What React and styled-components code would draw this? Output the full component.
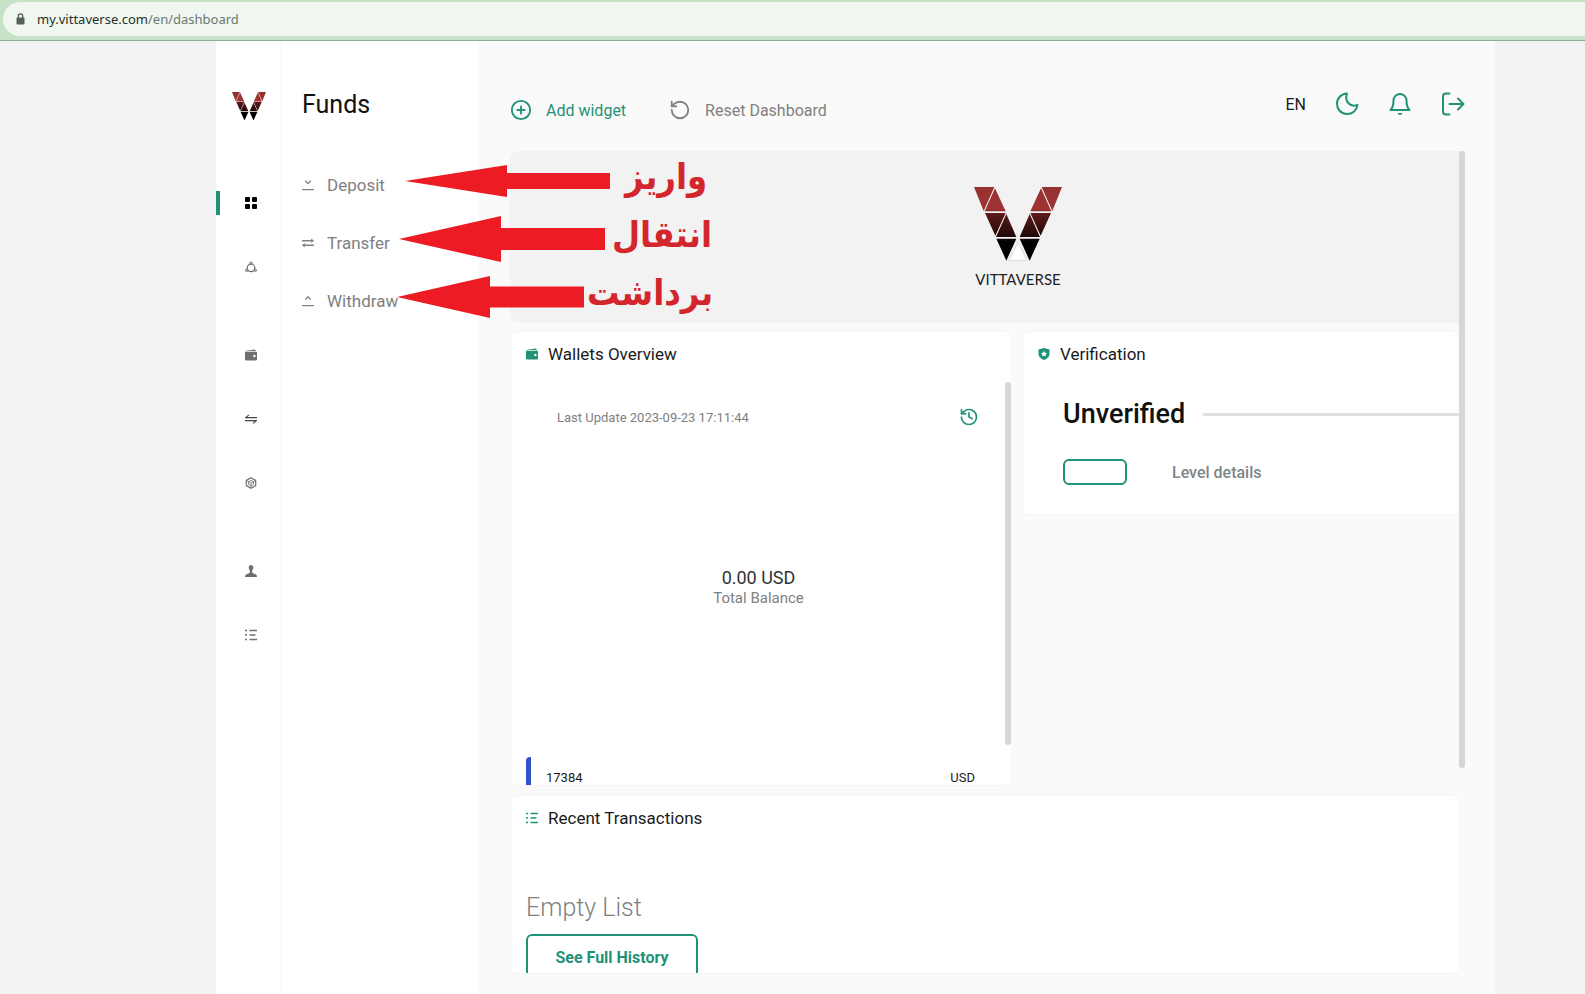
import styled, { createGlobalStyle, css } from 'styled-components';
import { CirclePlus, RotateCcw, History } from 'lucide-react';

const green = '#1f9277';
const grey = '#808080';

const GlobalStyle = createGlobalStyle`
  * {
    box-sizing: border-box;
  }
  body {
    margin: 0;
    background: #f3f3f3;
    color: #1a1a1a;
    font-family: Roboto, "Liberation Sans", sans-serif;
    font-size: 16px;
  }
  h1, h2, h3, p, ul {
    margin: 0;
    padding: 0;
    font-weight: 400;
  }
  ul {
    list-style: none;
  }
  a {
    color: inherit;
    text-decoration: none;
  }
  button {
    padding: 0;
    border: 0;
    background: none;
    color: inherit;
    font: inherit;
    cursor: pointer;
  }
  svg {
    display: block;
    flex: none;
  }
`;

const Page = styled.div`
  display: flex;
  flex-direction: column;
  height: 100vh;
  overflow: hidden;
`;

const BrowserBar = styled.header`
  flex: none;
  padding: 2px 0 4px 3px;
  background: #c6e2c7;
  border-bottom: 1px solid #92ad96;
`;

const AddressField = styled.div`
  display: flex;
  align-items: center;
  gap: 12px;
  height: 34px;
  padding-left: 13px;
  border-radius: 17px 0 0 17px;
  background: #eff7f0;
  color: #6d766f;
  font-family: "Noto Sans", sans-serif;
  font-size: 13px;
  strong {
    color: #2a2f2b;
    font-weight: 400;
  }
`;

const Shell = styled.div`
  flex: 1;
  min-height: 0;
  display: flex;
  margin: 0 90px 0 216px;
`;

const Rail = styled.nav`
  flex: none;
  width: 65px;
  background: #fff;
  border-right: 1px solid #f9f9f9;
`;

const RailLogo = styled.a`
  display: flex;
  align-items: flex-start;
  justify-content: center;
  padding: 51px 0 0 2px;
  height: 130px;
`;

const RailGroup = styled.ul`
  margin-bottom: 24px;
`;

const RailLink = styled.a`
  display: flex;
  align-items: center;
  height: 64px;
  padding-left: 29px;
  color: #6f6f6f;
  ${props => props.$active && css`
    padding-left: 0;
    color: #000;
    &::before {
      content: '';
      width: 4px;
      height: 24px;
      margin-right: 25px;
      background: ${green};
    }
  `}
`;

const SubMenu = styled.nav`
  flex: none;
  width: 198px;
  padding: 49px 0 0 21px;
  background: #fff;
  h1 {
    font-size: 25px;
    line-height: 30px;
    color: #111;
  }
`;

const MenuList = styled.ul`
  margin-top: 36px;
`;

const MenuItem = styled.li`
  position: relative;
  height: 58px;
  a {
    display: flex;
    align-items: center;
    gap: 13px;
    height: 58px;
    color: ${grey};
    font-size: 17px;
  }
`;

// red callouts float over the dashboard
const Callout = styled.div`
  position: absolute;
  z-index: 2;
  top: -4px;
  left: ${props => props.$left}px;
  height: 58px;
  display: flex;
  align-items: center;
  gap: ${props => props.$gap}px;
  pointer-events: none;
  span {
    padding-bottom: 8px;
    color: #d3262c;
    font-family: "DejaVu Sans Condensed", "DejaVu Sans", sans-serif;
    font-size: 36px;
    font-weight: 700;
    line-height: 44px;
    white-space: nowrap;
  }
`;

const Main = styled.main`
  flex: 1;
  min-width: 0;
  display: flex;
  flex-direction: column;
  padding: 0 30px 20px 31px;
  background: #fafafa;
`;

const TopBar = styled.div`
  flex: none;
  display: flex;
  justify-content: space-between;
  height: 110px;
  padding-top: 46px;
`;

const Tools = styled.div`
  display: flex;
  align-items: center;
  gap: 43px;
  height: 46px;
`;

const ToolButton = styled.button`
  display: flex;
  align-items: center;
  gap: 14px;
  color: ${props => (props.$primary ? green : grey)};
`;

const Actions = styled.div`
  display: flex;
  align-items: center;
  gap: 29px;
  height: 34px;
  color: ${green};
`;

const Language = styled.button`
  color: #1a1a1a;
`;

const ScrollArea = styled.div`
  flex: 1;
  min-height: 0;
  display: flex;
`;

const Thumb = styled.div`
  flex: none;
  width: 6px;
  height: ${props => props.$height};
  border-radius: 3px;
  background: #d6d6d6;
`;

const Widgets = styled.div`
  flex: 1;
  min-width: 0;
  display: flex;
  flex-direction: column;
  gap: 9px;
`;

const Banner = styled.section`
  flex: none;
  display: flex;
  flex-direction: column;
  align-items: center;
  gap: 7px;
  height: 171px;
  padding: 36px 0 0 67px;
  border-radius: 8px 0 0 8px;
  background: #f2f2f2;
  p {
    font-family: Lato, sans-serif;
    font-size: 15px;
    line-height: 20px;
    color: #222;
  }
`;

const Columns = styled.div`
  flex: none;
  display: grid;
  grid-template-columns: 501fr 437fr;
  align-items: start;
  gap: 11px;
`;

const Card = styled.section`
  display: flex;
  flex-direction: column;
  min-width: 0;
  height: ${props => props.$height};
  flex: ${props => (props.$fill ? '1' : 'none')};
  overflow: hidden;
  border: 1px solid #f5f5f5;
  border-right: 0;
  border-radius: 6px;
  background: #fff;
`;

const CardTitle = styled.h2`
  flex: none;
  display: flex;
  align-items: center;
  gap: 10px;
  height: 44px;
  padding-left: 15px;
  font-size: 17px;
  svg {
    color: ${green};
  }
`;

const WalletBody = styled.div`
  flex: 1;
  display: flex;
  padding-top: 6px;
`;

const WalletContent = styled.div`
  flex: 1;
  display: flex;
  flex-direction: column;
  justify-content: space-between;
  padding-left: 15px;
`;

const UpdateRow = styled.div`
  display: flex;
  align-items: center;
  justify-content: space-between;
  padding: 25px 26px 0 31px;
  color: ${grey};
  font-size: 13px;
  button {
    color: ${green};
  }
`;

const Balance = styled.div`
  padding: 0 14px 8px 0;
  text-align: center;
  font-size: 15px;
  line-height: 20px;
  color: ${grey};
  strong {
    display: block;
    color: #333;
    font-size: 18px;
    font-weight: 400;
  }
`;

const Account = styled.div`
  display: flex;
  justify-content: space-between;
  height: 28px;
  padding: 13px 30px 0 15px;
  border-left: 5px solid #3154cd;
  border-radius: 4px 0 0 0;
  font-size: 13px;
  line-height: 15px;
`;

const Status = styled.div`
  display: flex;
  align-items: center;
  gap: 18px;
  margin: 22px 0 0 40px;
  h3 {
    font-size: 27px;
    line-height: 32px;
    font-weight: 500;
    color: #111;
  }
  &::after {
    content: '';
    flex: 1;
    height: 3px;
    background: #e0e0e0;
  }
`;

const LevelRow = styled.div`
  display: flex;
  align-items: center;
  gap: 45px;
  margin: 29px 0 0 40px;
  color: #7c8588;
  font-weight: 500;
`;

const OutlineButton = styled.button`
  width: ${props => props.$width}px;
  height: ${props => props.$height}px;
  border: 2px solid ${green};
  border-radius: 6px;
  color: ${green};
  font-weight: 700;
`;

const EmptyState = styled.div`
  display: flex;
  flex-direction: column;
  align-items: flex-start;
  gap: 10px;
  padding: 52px 0 0 15px;
  p {
    color: ${grey};
    font-size: 25px;
    font-weight: 300;
    line-height: 32px;
  }
`;

function Logo({ width, id, foot }) {
  const arm = (
    <>
      <path d="M0 0H61L29 72Z" />
      <path d="M63 4L95 73H32Z" />
      <path d="M33 78H95L64 146Z" />
      <path d="M97 81L127 150H66Z" />
      <path d="M67 155H127L97 221Z" />
    </>
  );
  return (
    <svg width={width} viewBox="0 0 264 224" aria-hidden="true">
      <defs>
        <linearGradient id={id} x1="0" y1="0" x2="0" y2="222" gradientUnits="userSpaceOnUse">
          <stop offset="0" stopColor="#94302f" />
          <stop offset=".3" stopColor="#a13434" />
          <stop offset=".36" stopColor="#5c1a1a" />
          <stop offset=".68" stopColor="#1f0708" />
          <stop offset=".75" stopColor="#000" />
        </linearGradient>
      </defs>
      <g fill={`url(#${id})`}>
        {arm}
        <g transform="matrix(-1 0 0 1 264 0)">{arm}</g>
      </g>
      {foot && <path d="M132 166L159 220H105Z" fill="#fff" stroke="#dcdcdc" strokeWidth="3" />}
    </svg>
  );
}

function Glyph({ size = 12, box = 12, children, ...rest }) {
  return (
    <svg width={size} height={size} viewBox={`0 0 ${box} ${box}`} fill="none" stroke="currentColor" aria-hidden="true" {...rest}>
      {children}
    </svg>
  );
}

const LockIcon = () => (
  <Glyph width="9" height="12" viewBox="0 0 9 12" color="#55605a">
    <path d="M2.3 5V3a2.2 2.2 0 0 1 4.4 0v2" strokeWidth="1.3" />
    <rect x=".5" y="4.5" width="8" height="7" rx="1" fill="currentColor" stroke="none" />
  </Glyph>
);

const GridIcon = () => (
  <Glyph stroke="none" fill="currentColor">
    <rect width="5" height="5" rx="1" />
    <rect x="7" width="5" height="5" rx="1" />
    <rect y="7" width="5" height="5" rx="1" />
    <rect x="7" y="7" width="5" height="5" rx="1" />
  </Glyph>
);

const NetworkIcon = () => (
  <Glyph>
    <circle cx="6" cy="6.8" r="3.8" strokeWidth="1.2" />
    <g fill="currentColor" stroke="none">
      <circle cx="6" cy="2.2" r="1.6" />
      <circle cx="1.8" cy="9.2" r="1.6" />
      <circle cx="10.2" cy="9.2" r="1.6" />
    </g>
    <g fill="#fff" stroke="none">
      <circle cx="6" cy="2.2" r=".6" />
      <circle cx="1.8" cy="9.2" r=".6" />
      <circle cx="10.2" cy="9.2" r=".6" />
    </g>
  </Glyph>
);

const WalletIcon = () => (
  <Glyph stroke="none" fill="currentColor">
    <path d="M1 1.8L9.6.4q1 0 1 1v.6H1z" />
    <path d="M0 2.4h10.5q1.5 0 1.5 1.4v6.4q0 1.4-1.5 1.4h-9Q0 11.6 0 10.2z" />
    <path d="M.8 2.4h9.8" stroke="#fff" strokeWidth=".5" />
    <circle cx="9.4" cy="7" r="1.2" fill="#fff" />
  </Glyph>
);

const SwapIcon = () => (
  <Glyph stroke="#444" strokeWidth="1.1">
    <path d="M12 4.6H.8L4 1.8M0 7.6h11.2L8 10.4" />
  </Glyph>
);

const CubeIcon = () => (
  <Glyph>
    <path d="M6 .8l4.7 2.6v5.2L6 11.2 1.3 8.6V3.4z" strokeWidth="1.2" />
    <path d="M3.5 4.7L6 3.4l2.5 1.3v2.7L6 8.7 3.5 7.4zM3.5 4.7L6 6l2.5-1.3M6 6v5M1.3 3.4l2.2 1.3M10.7 3.4L8.5 4.7" strokeWidth=".8" />
  </Glyph>
);

const PersonIcon = () => (
  <Glyph stroke="none" fill="currentColor">
    <path d="M6 0c1.6 0 2.5 1.2 2.3 2.8-.1 1.2-.5 2-1.100 2.5v1.900c0 .8 1 1.100 2.300 1.600 1.500.5 2.500 1.300 2.500 3.200H0c0-1.900 1-2.700 2.500-3.200 1.300-.5 2.300-.8 2.300-1.600V5.300C4.200 4.800 3.800 4 3.700 2.800 3.500 1.200 4.400 0 6 0z" />
  </Glyph>
);

const ListIcon = () => (
  <Glyph strokeWidth="1.5">
    <path d="M0 1.5h2M0 6h2M0 10.5h2M4.5 1.5H12M4.5 6H10.5M4.5 10.5H12" />
  </Glyph>
);

const DepositIcon = () => (
  <Glyph size={12} box={13} strokeWidth="1.5">
    <path d="M3.5 2L6.5 5l3-3M0 11.5h13" />
  </Glyph>
);

const TransferIcon = () => (
  <Glyph size={12} box={13} strokeWidth="1.5">
    <path d="M0 4h12M1 9h12" />
    <path d="M10 1.5L13 4l-3 2.5zM3 6.5L0 9l3 2.5z" fill="currentColor" stroke="none" />
  </Glyph>
);

const WithdrawIcon = () => (
  <Glyph size={12} box={13} strokeWidth="1.5">
    <path d="M3.5 5L6.500 2l3 3M0 11.5h13" />
  </Glyph>
);

const ShieldIcon = () => (
  <Glyph stroke="none" fill="currentColor">
    <path d="M6 0l5.5 1.6v4C11.5 9 9.2 11 6 12 2.8 11 .5 9 .5 5.6v-4z" />
    <path d="M6 2.8l.9 1.9 2.1.3-1.5 1.5.4 2.1L6 7.6l-1.900 1 .4-2.100L3 5l2.100-.3z" fill="#fff" />
  </Glyph>
);

const MoonIcon = () => (
  <Glyph size={24} box={24} strokeWidth="2" strokeLinejoin="round">
    <path d="M12 1.500A10.300 10.300 0 1 0 22.500 13C15.500 15.500 9 9.500 12 1.500z" />
  </Glyph>
);

const BellIcon = () => (
  <Glyph size={24} box={24} strokeWidth="2" strokeLinejoin="round">
    <path d="M2.500 18C4.500 16 5.500 14 5.500 8.500a6.500 6.500 0 0 1 13 0c0 5.500 1 7.500 3 9.500z" />
    <path d="M9.500 21c.8 2.500 4.200 2.500 5 0z" fill="currentColor" stroke="none" />
  </Glyph>
);

const LogoutIcon = () => (
  <Glyph size={24} box={24} strokeWidth="2" strokeLinecap="round" strokeLinejoin="round">
    <path d="M8.500 1.500H5Q2 1.500 2 4.500v15Q2 22.500 5 22.500h3.500M8.500 12h14M17 6.500L22.500 12 17 17.500" />
  </Glyph>
);

// head: arrow head length, height: head height, shaft: thickness
function Arrow({ length, head, height, shaft }) {
  const mid = height / 2;
  const top = mid - shaft / 2;
  const bottom = mid + shaft / 2;
  return (
    <svg width={length} height={height} aria-hidden="true">
      <path
        d={`M0 ${mid}L${head} 0V${top}H${length}V${bottom}H${head}V${height}Z`}
        fill="#ed1c24"
      />
    </svg>
  );
}

const menu = [
  { name: 'Deposit', icon: DepositIcon, label: 'واریز', left: 103, gap: 15, arrow: { length: 205, head: 102, height: 32, shaft: 16 } },
  { name: 'Transfer', icon: TransferIcon, label: 'انتقال', left: 97, gap: 7, arrow: { length: 206, head: 102, height: 46, shaft: 22 } },
  { name: 'Withdraw', icon: WithdrawIcon, label: 'برداشت', left: 95, gap: 3, arrow: { length: 187, head: 93, height: 42, shaft: 21 } },
];

const rail = [
  [['Dashboard', GridIcon], ['Network', NetworkIcon]],
  [['Wallets', WalletIcon], ['Exchange', SwapIcon], ['Products', CubeIcon]],
  [['Profile', PersonIcon], ['Transactions', ListIcon]],
];

function App() {
  return (
    <Page>
      <GlobalStyle />
      <BrowserBar>
        <AddressField>
          <LockIcon />
          <span><strong>my.vittaverse.com</strong>/en/dashboard</span>
        </AddressField>
      </BrowserBar>
      <Shell>
        <Rail>
          <RailLogo href="#" aria-label="Vittaverse">
            <Logo width={34} id="railLogo" />
          </RailLogo>
          {rail.map((group, i) => (
            <RailGroup key={i}>
              {group.map(([name, Icon]) => (
                <li key={name}>
                  <RailLink href="#" aria-label={name} $active={name === 'Dashboard'}>
                    <Icon />
                  </RailLink>
                </li>
              ))}
            </RailGroup>
          ))}
        </Rail>
        <SubMenu>
          <h1>Funds</h1>
          <MenuList>
            {menu.map(({ name, icon: Icon, label, left, gap, arrow }) => (
              <MenuItem key={name}>
                <a href="#"><Icon />{name}</a>
                <Callout $left={left} $gap={gap}>
                  <Arrow {...arrow} />
                  <span lang="fa" dir="rtl">{label}</span>
                </Callout>
              </MenuItem>
            ))}
          </MenuList>
        </SubMenu>
        <Main>
          <TopBar>
            <Tools>
              <ToolButton $primary><CirclePlus size={22} strokeWidth={2} />Add widget</ToolButton>
              <ToolButton><RotateCcw size={22} strokeWidth={2} />Reset Dashboard</ToolButton>
            </Tools>
            <Actions>
              <Language>EN</Language>
              <button aria-label="Dark mode"><MoonIcon /></button>
              <button aria-label="Notifications"><BellIcon /></button>
              <button aria-label="Log out"><LogoutIcon /></button>
            </Actions>
          </TopBar>
          <ScrollArea>
            <Widgets>
              <Banner>
                <Logo width={88} id="bannerLogo" foot />
                <p>VITTAVERSE</p>
              </Banner>
              <Columns>
                <Card $height="455px">
                  <CardTitle><WalletIcon />Wallets Overview</CardTitle>
                  <WalletBody>
                    <WalletContent>
                      <UpdateRow>
                        Last Update 2023-09-23 17:11:44
                        <button aria-label="Refresh"><History size={20} /></button>
                      </UpdateRow>
                      <Balance>
                        <strong>0.00 USD</strong>
                        Total Balance
                      </Balance>
                      <Account>
                        <span>17384</span>
                        <span>USD</span>
                      </Account>
                    </WalletContent>
                    <Thumb $height="90%" />
                  </WalletBody>
                </Card>
                <Card $height="184px">
                  <CardTitle><ShieldIcon />Verification</CardTitle>
                  <Status>
                    <h3>Unverified</h3>
                  </Status>
                  <LevelRow>
                    <OutlineButton $width={64} $height={26} aria-label="Verify" />
                    Level details
                  </LevelRow>
                </Card>
              </Columns>
              <Card $fill>
                <CardTitle><ListIcon />Recent Transactions</CardTitle>
                <EmptyState>
                  <p>Empty List</p>
                  <OutlineButton $width={172} $height={46}>See Full History</OutlineButton>
                </EmptyState>
              </Card>
            </Widgets>
            <Thumb $height="75%" />
          </ScrollArea>
        </Main>
      </Shell>
    </Page>
  );
}

export default App;
